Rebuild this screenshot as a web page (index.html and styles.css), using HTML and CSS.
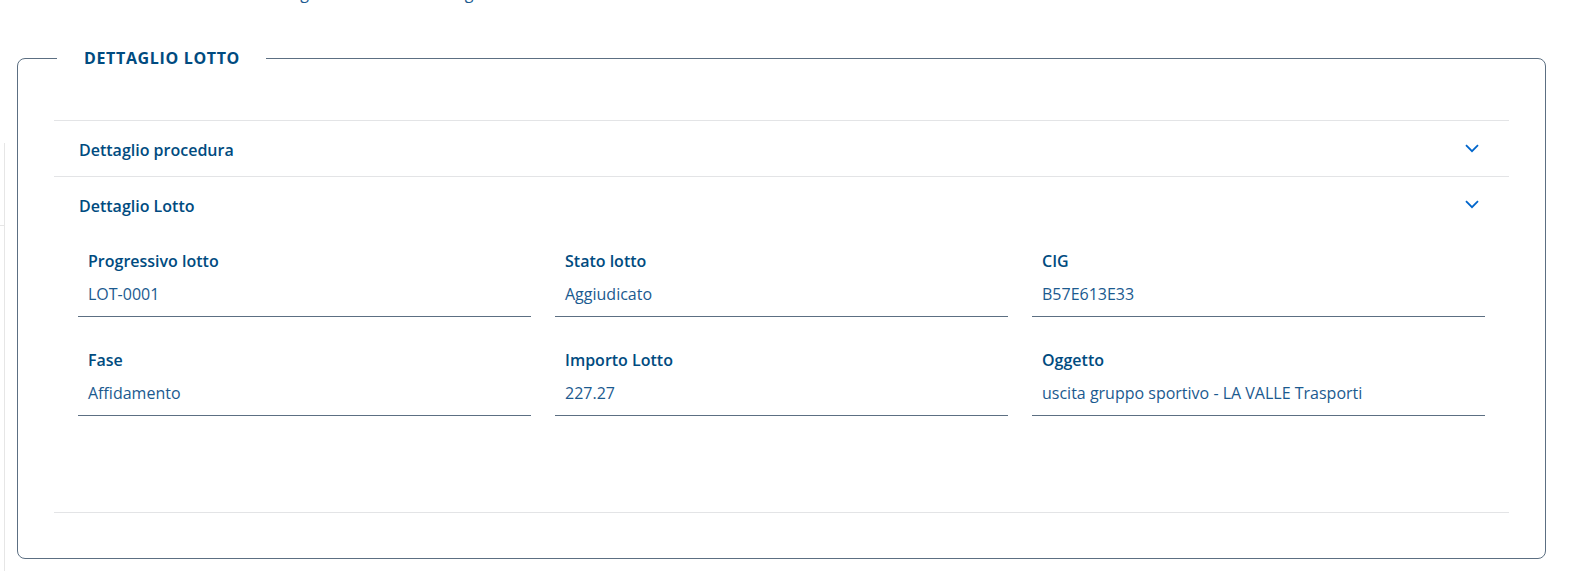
FILE: index.html
```html
<!DOCTYPE html>
<html lang="it">
<head>
<meta charset="utf-8">
<title>Dettaglio lotto</title>
<link rel="stylesheet" href="styles.css">
</head>
<body>
<div class="page">
  <aside class="rail"><div class="rail-top"></div></aside>
  <main class="main">
    <p class="intro">Visualizza il dettaglio del lotto e della gara</p>

    <fieldset class="card">
      <legend class="card-title">DETTAGLIO LOTTO</legend>

      <div class="accordion">
        <section class="acc-item">
          <button class="acc-head" type="button">
            <span>Dettaglio procedura</span>
            <svg class="chev" width="14" height="9" viewBox="0 0 14 9"><path d="M1 1.2 L7 7.2 L13 1.2" fill="none" stroke="#0066cc" stroke-width="1.8"/></svg>
          </button>
        </section>

        <section class="acc-item open">
          <button class="acc-head" type="button">
            <span>Dettaglio Lotto</span>
            <svg class="chev" width="14" height="9" viewBox="0 0 14 9"><path d="M1 1.2 L7 7.2 L13 1.2" fill="none" stroke="#0066cc" stroke-width="1.8"/></svg>
          </button>
          <div class="acc-body">
            <div class="fields">
              <div class="field"><div class="f-label">Progressivo lotto</div><div class="f-value">LOT-0001</div></div>
              <div class="field"><div class="f-label">Stato lotto</div><div class="f-value">Aggiudicato</div></div>
              <div class="field"><div class="f-label">CIG</div><div class="f-value">B57E613E33</div></div>
              <div class="field"><div class="f-label">Fase</div><div class="f-value">Affidamento</div></div>
              <div class="field"><div class="f-label">Importo Lotto</div><div class="f-value">227.27</div></div>
              <div class="field"><div class="f-label">Oggetto</div><div class="f-value">uscita gruppo sportivo - LA VALLE Trasporti</div></div>
            </div>
          </div>
        </section>
      </div>
    </fieldset>
  </main>
</div>
</body>
</html>
```
FILE: styles.css
```css
html, body {
  margin: 0;
  padding: 0;
  background: #ffffff;
}

body {
  font-family: "Open Sans", "Noto Sans", sans-serif;
  font-size: 16px;
  line-height: 24px;
  color: #004b80;
  overflow: hidden;
}

.page {
  display: flex;
  align-items: flex-start;
  height: 571px;
}

/* thin edge of the side panel on the left */
.rail {
  flex: 0 0 4px;
  width: 4px;
  margin-top: 143px;
  height: 428px;
  border-right: 1px solid #e6e6e6;
}

.rail-top {
  height: 82px;
  border-bottom: 1px solid #e6e6e6;
}

.main {
  flex: 0 0 1529px;
  margin-left: 12px;
  display: flex;
  flex-direction: column;
}

.intro {
  margin: -19px 0 0 150px;
  height: 24px;
  color: #1b5a8f;
  white-space: nowrap;
  word-spacing: 3px;
}

.card {
  margin: 42px 0 0 0;
  padding: 51px 36px 45px 36px;
  border: 1px solid #5c6f82;
  border-radius: 8px;
  min-width: 0;
}

.card-title {
  margin-left: 3px;
  padding: 0 26px 0 27px;
  font-weight: 700;
  font-size: 16px;
  line-height: 22px;
  letter-spacing: 0.65px;
  color: #004b80;
}

.accordion {
  border-top: 1px solid #e3e4e6;
}

.acc-item {
  border-bottom: 1px solid #e3e4e6;
}

.acc-head {
  display: flex;
  align-items: center;
  justify-content: space-between;
  width: 100%;
  height: 55px;
  padding: 3px 30px 0 25px;
  border: 0;
  background: transparent;
  font-family: inherit;
  font-size: 16px;
  line-height: 24px;
  font-weight: 600;
  color: #004b80;
  text-align: left;
  cursor: pointer;
}

.chev {
  display: block;
  margin-top: -4px;
}

.acc-body {
  padding: 17px 24px 96px 24px;
}

.fields {
  display: grid;
  grid-template-columns: repeat(3, 1fr);
  column-gap: 24px;
  row-gap: 31px;
}

.field {
  border-bottom: 1px solid #5c6f82;
  padding: 0 10px 10px 10px;
}

.f-label {
  font-weight: 600;
  color: #004b80;
}

.f-value {
  margin-top: 9px;
  color: #1b5a8f;
  white-space: nowrap;
}
```
